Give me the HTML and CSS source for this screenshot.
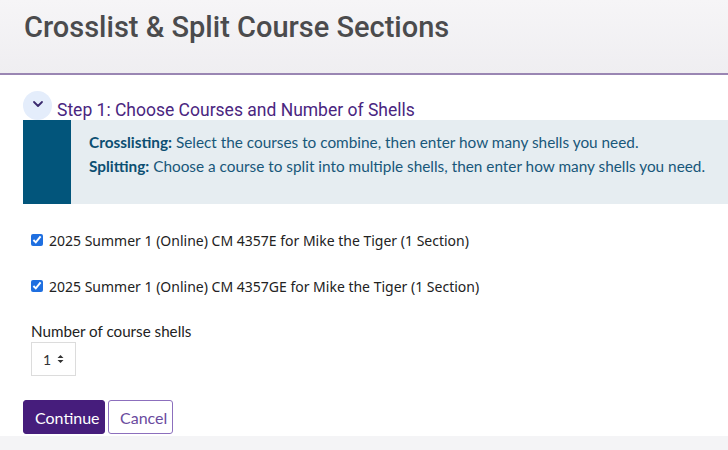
FILE: index.html
```html
<!DOCTYPE html>
<html lang="en">
<head>
<meta charset="utf-8">
<title>Crosslist &amp; Split Course Sections</title>
<link rel="stylesheet" href="styles.css">
</head>
<body>
<header class="page-header">
  <h1 class="page-title">Crosslist &amp; Split Course Sections</h1>
</header>
<main class="content">
  <div class="step-head">
    <span class="step-toggle">
      <svg width="12" height="8" viewBox="0 0 12 8" aria-hidden="true"><path d="M2 2 L6 6 L10 2" fill="none" stroke="#3b2a6e" stroke-width="1.8" stroke-linecap="round" stroke-linejoin="round"/></svg>
    </span>
    <span class="step-title">Step 1: Choose Courses and Number of Shells</span>
  </div>
  <div class="info-box">
    <div class="info-bar"></div>
    <div class="info-text">
      <p><strong>Crosslisting:</strong> Select the courses to combine, then enter how many shells you need.</p>
      <p><strong>Splitting:</strong> Choose a course to split into multiple shells, then enter how many shells you need.</p>
    </div>
  </div>
  <form class="form">
    <label class="course"><input type="checkbox" checked> <span>2025 Summer 1 (Online) CM 4357E for Mike the Tiger (1 Section)</span></label>
    <label class="course"><input type="checkbox" checked> <span>2025 Summer 1 (Online) CM 4357GE for Mike the Tiger (1 Section)</span></label>
    <div class="field-label">Number of course shells</div>
    <div class="select-box"><span class="select-value">1</span>
      <svg width="7" height="10" viewBox="0 0 7 10" aria-hidden="true"><path d="M3.5 1 L6.5 4 L0.5 4 Z M3.5 9 L6.5 6 L0.5 6 Z" fill="#333"/></svg>
    </div>
    <div class="actions">
      <button type="button" class="btn btn-primary">Continue</button>
      <button type="button" class="btn btn-secondary">Cancel</button>
    </div>
  </form>
</main>
<footer class="page-footer"></footer>
</body>
</html>
```
FILE: styles.css
```css
* { box-sizing: border-box; }
html, body { margin: 0; padding: 0; background: #fff; }
body { font-family: "Lato", "Noto Sans", sans-serif; overflow: hidden; }

.page-header {
  height: 75px;
  background: linear-gradient(#f6f5f7, #efeef1);
  border-bottom: 2px solid #9a86b3;
  padding: 0 24px;
}
.page-title {
  margin: 0;
  padding-top: 9px;
  font-family: "Roboto", sans-serif;
  font-weight: 500;
  font-size: 29px;
  line-height: 36px;
  color: #4b4b4d;
}

.content { padding-left: 23px; }

.step-head {
  display: flex;
  align-items: center;
  margin-top: 16px;
  height: 29px;
}
.step-toggle {
  width: 29px;
  height: 29px;
  border-radius: 50%;
  background: #e4edfb;
  display: flex;
  align-items: center;
  justify-content: center;
  padding-bottom: 3px;
}
.step-title {
  margin-left: 5px;
  margin-top: 9px;
  font-family: "Roboto", sans-serif;
  font-size: 17.5px;
  color: #4a2680;
}

.info-box {
  display: flex;
  height: 84px;
  background: #e6edf1;
}
.info-bar { width: 48px; background: #02557b; }
.info-text {
  padding: 10px 0 0 18px;
  color: #18577a;
  font-size: 15.35px;
  line-height: 24px;
  white-space: nowrap;
}
.info-text p { margin: 0; }
.info-text strong { color: #0c4f72; }

.form { padding-left: 8px; }
.course {
  display: flex;
  align-items: center;
  height: 46px;
  font-family: "Noto Sans", sans-serif;
  font-size: 14px;
  color: #222;
}
.course:first-child { margin-top: 13px; }
.course input {
  width: 12px;
  height: 12px;
  margin: 0 6px 0 0;
  accent-color: #1f6fe0;
}

.field-label {
  margin-top: 11px;
  font-size: 15.2px;
  line-height: 22px;
  color: #222;
}
.select-box {
  width: 45px;
  height: 34px;
  border: 1px solid #dcdcdc;
  display: flex;
  align-items: center;
  padding-left: 11px;
  gap: 6px;
  font-size: 14px;
  color: #333;
}

.actions {
  display: flex;
  gap: 3px;
  margin-top: 24px;
  margin-left: -8px;
}
.btn {
  height: 34px;
  border-radius: 3px;
  font-family: "Lato", sans-serif;
  font-size: 16px;
  padding: 0 11px;
  cursor: pointer;
}
.btn-primary {
  background: #461d7c;
  border: 1px solid #461d7c;
  color: #fff;
  width: 82px;
}
.btn-secondary {
  background: #fff;
  border: 1px solid #8c6fbd;
  color: #6a4a9e;
  width: 65px;
}

.page-footer {
  margin-top: 2px;
  height: 14px;
  background: #f4f4f6;
}
```
